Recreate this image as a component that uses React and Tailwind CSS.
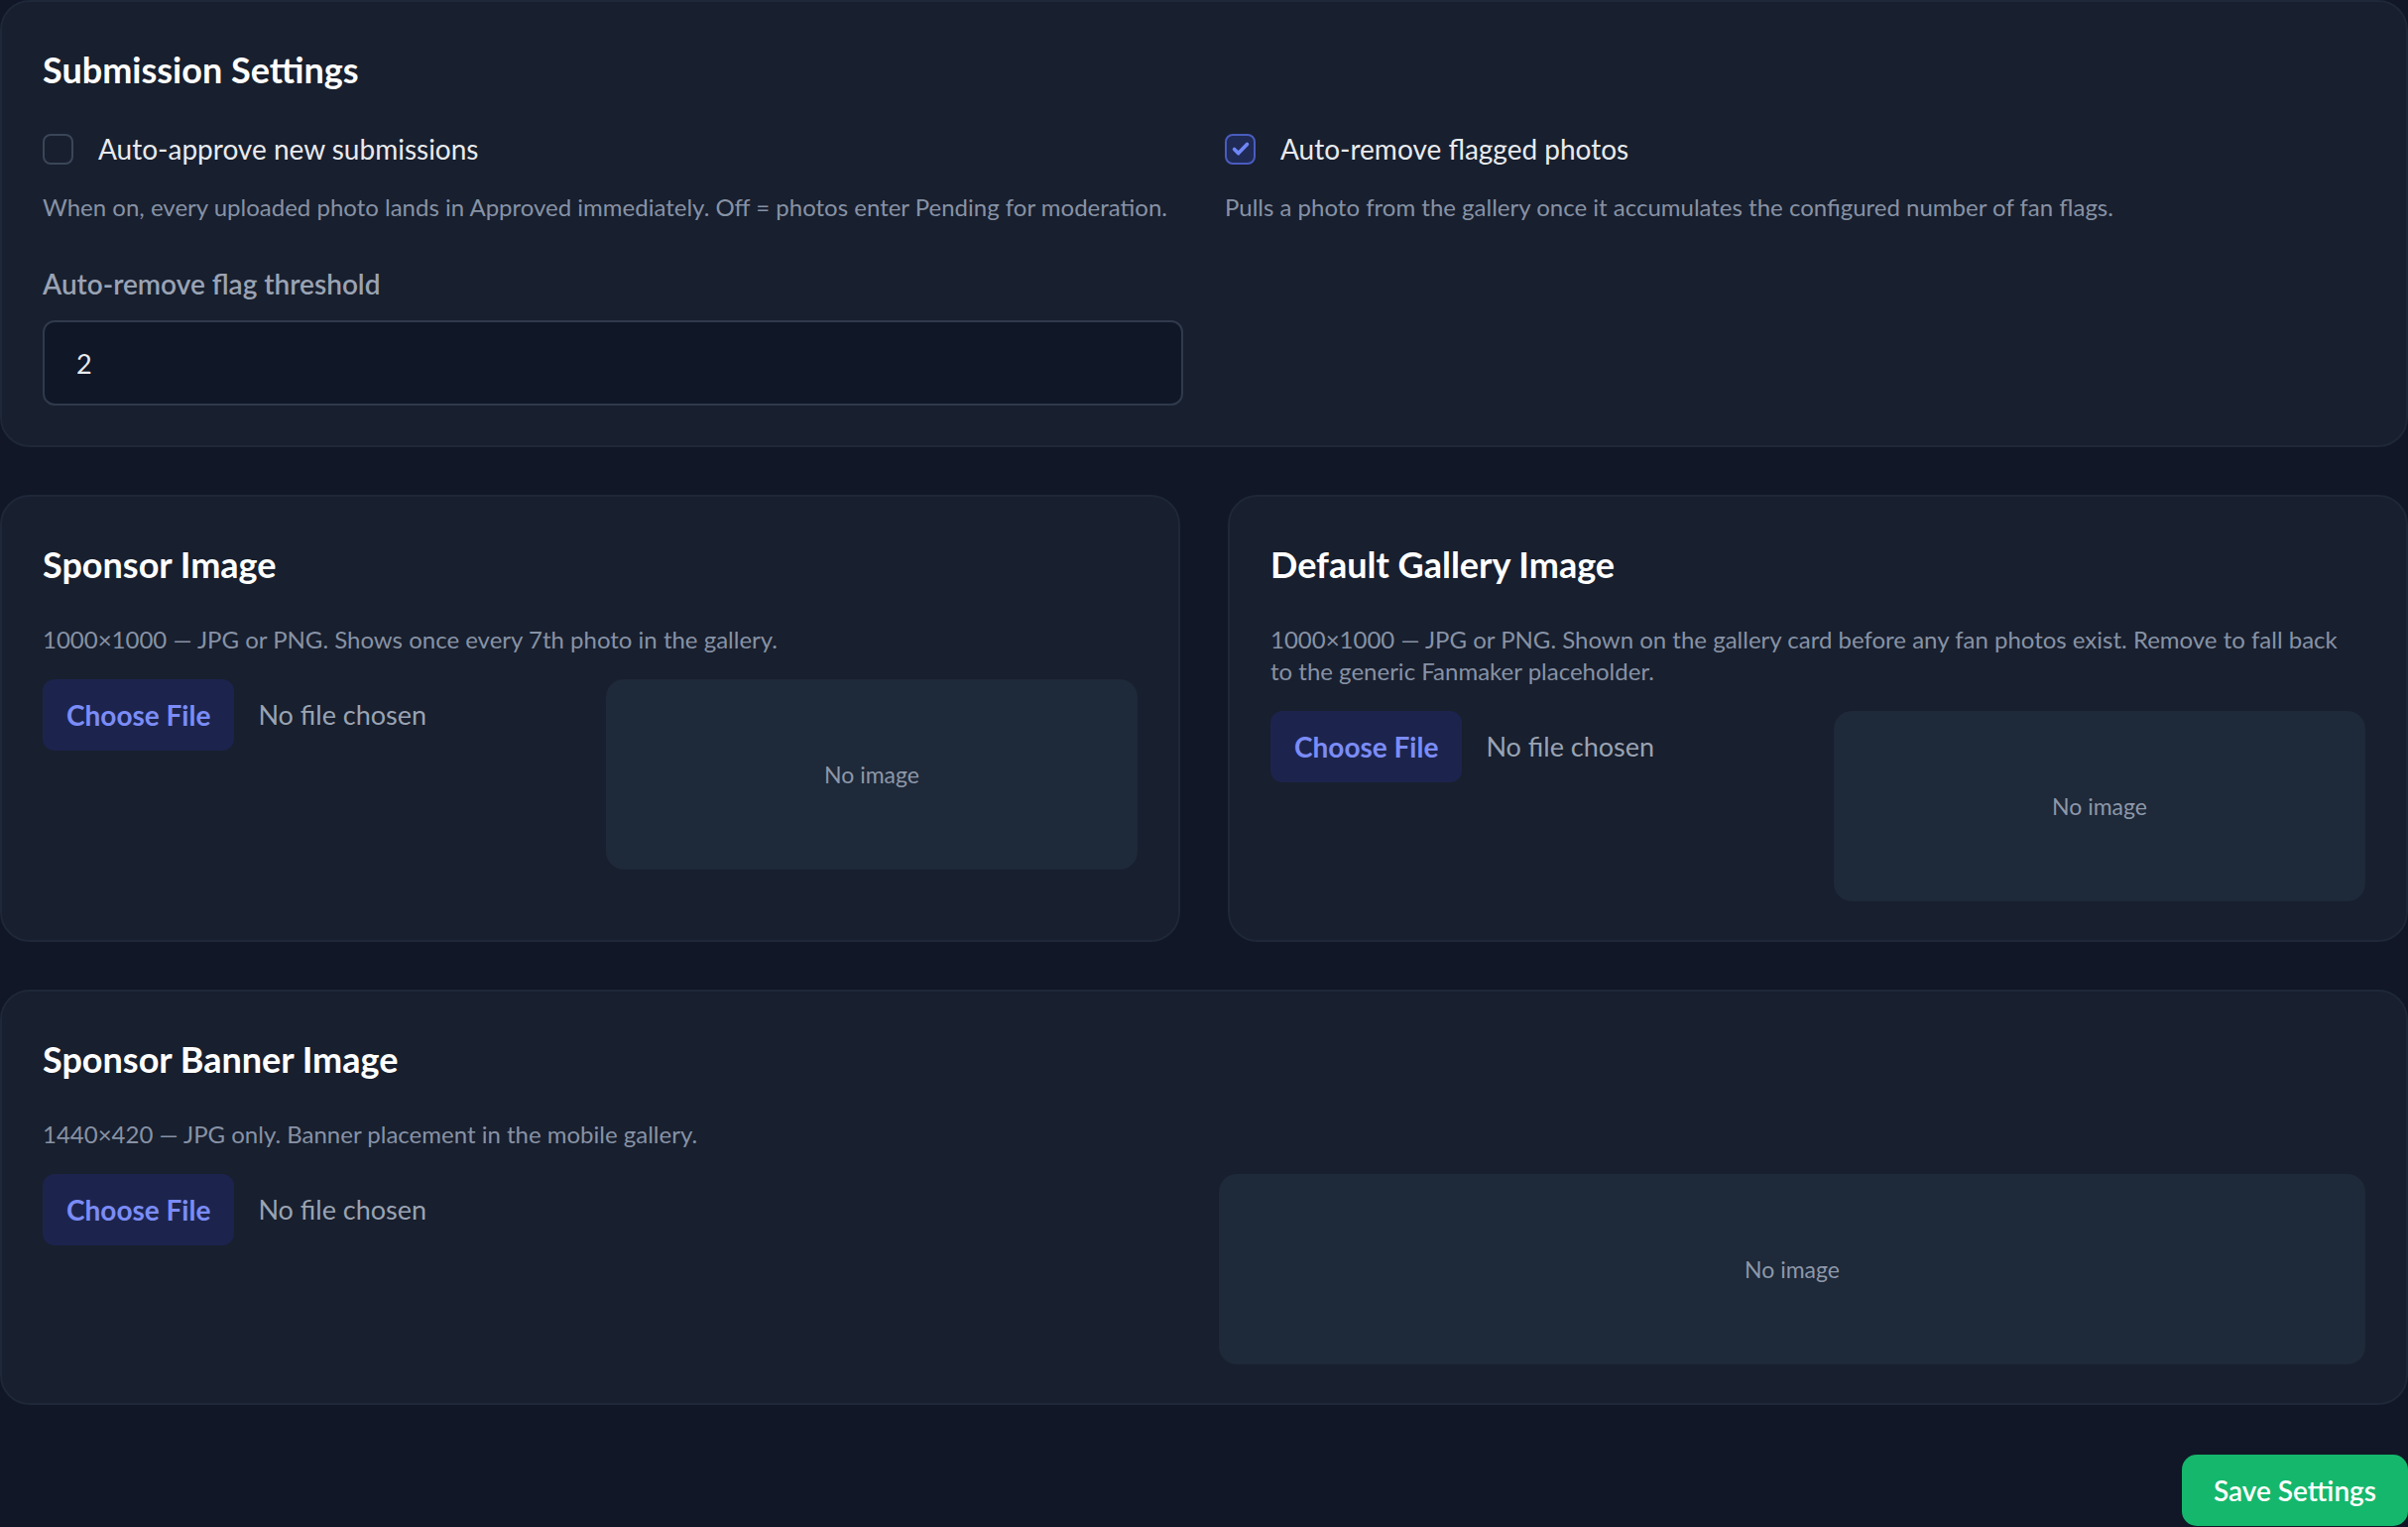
import React, { useState } from 'react';

const font = { fontFamily: 'Lato, "Noto Sans", sans-serif' };

const Checkbox = ({ checked, onChange }) => (
  <button
    onClick={onChange}
    className={`w-[31px] h-[31px] shrink-0 rounded-[8px] border-2 flex items-center justify-center ${
      checked ? 'bg-[#1f2a55] border-[#4a5cbf]' : 'bg-transparent border-[#3a4658]'
    }`}
  >
    {checked && (
      <svg viewBox="0 0 24 24" className="w-[22px] h-[22px]" fill="none" stroke="#6f86f7" strokeWidth="4" strokeLinecap="round" strokeLinejoin="round">
        <path d="M5 12.5l4.5 4.5L19 7" />
      </svg>
    )}
  </button>
);

const ImageCard = ({ title, desc, gap = 'gap-[32px]' }) => (
  <div className="bg-[#181f2e] border-2 border-[#1e2838] rounded-[30px] px-[41px] pt-[41px] pb-[39px]">
    <h2 className="text-[36px] leading-[54px] font-bold text-white">{title}</h2>
    <p className="mt-[33px] text-[24px] leading-[32px] text-[#8792a5]">{desc}</p>
    <div className={`mt-[24px] grid grid-cols-2 ${gap}`}>
      <div className="flex items-center gap-[24px] self-start">
        <button className="h-[72px] px-[24px] rounded-[12px] bg-[#1c244d] text-[#7b8cf7] font-bold text-[28px]">
          Choose File
        </button>
        <span className="text-[27px] text-[#9aa3b2]">No file chosen</span>
      </div>
      <div className="h-[192px] rounded-[18px] bg-[#1e2939] flex items-center justify-center text-[23px] text-[#8d97a8]">
        No image
      </div>
    </div>
  </div>
);

export default function App() {
  const [autoApprove, setAutoApprove] = useState(false);
  const [autoRemove, setAutoRemove] = useState(true);
  const [threshold, setThreshold] = useState('2');

  return (
    <div className="min-h-screen bg-[#111726]" style={font}>
      <div className="flex flex-col gap-[48px]">
        {/* Submission Settings */}
        <div className="bg-[#181f2e] border-2 border-[#1e2838] rounded-[30px] px-[41px] pt-[41px] pb-[40px]">
          <h2 className="text-[36px] leading-[54px] font-bold text-white">Submission Settings</h2>
          <div className="mt-[33px] grid grid-cols-2 gap-x-[42px] gap-y-[43px]">
            <div>
              <div className="h-[40px] flex items-center gap-[25px]">
                <Checkbox checked={autoApprove} onChange={() => setAutoApprove(!autoApprove)} />
                <span className="text-[28px] text-[#e8eaee]">Auto-approve new submissions</span>
              </div>
              <p className="mt-[23px] text-[24px] leading-[32px] text-[#8792a5]">
                When on, every uploaded photo lands in Approved immediately. Off = photos enter Pending for moderation.
              </p>
            </div>
            <div>
              <div className="h-[40px] flex items-center gap-[25px]">
                <Checkbox checked={autoRemove} onChange={() => setAutoRemove(!autoRemove)} />
                <span className="text-[28px] text-[#e8eaee]">Auto-remove flagged photos</span>
              </div>
              <p className="mt-[23px] text-[24px] leading-[32px] text-[#8792a5]">
                Pulls a photo from the gallery once it accumulates the configured number of fan flags.
              </p>
            </div>
            <div>
              <label className="block text-[28px] leading-[36px] font-semibold text-[#9aa3b4]">Auto-remove flag threshold</label>
              <input
                value={threshold}
                onChange={(e) => setThreshold(e.target.value)}
                className="mt-[19px] w-full h-[86px] rounded-[12px] bg-[#101727] border-2 border-[#2f3a4c] px-[32px] text-[27px] text-[#e8eaee] outline-none"
              />
            </div>
          </div>
        </div>

        {/* Image cards */}
        <div className="grid grid-cols-2 gap-[48px]">
          <ImageCard
            title="Sponsor Image"
            desc="1000×1000 — JPG or PNG. Shows once every 7th photo in the gallery."
          />
          <ImageCard
            title="Default Gallery Image"
            desc="1000×1000 — JPG or PNG. Shown on the gallery card before any fan photos exist. Remove to fall back to the generic Fanmaker placeholder."
          />
        </div>

        <ImageCard
          title="Sponsor Banner Image"
          desc="1440×420 — JPG only. Banner placement in the mobile gallery."
          gap="gap-[30px]"
        />
      </div>

      <div className="mt-[50px] flex justify-end">
        <button className="h-[72px] px-[32px] rounded-[15px] bg-[#15b76c] text-white text-[28px] font-semibold">
          Save Settings
        </button>
      </div>
    </div>
  );
}
